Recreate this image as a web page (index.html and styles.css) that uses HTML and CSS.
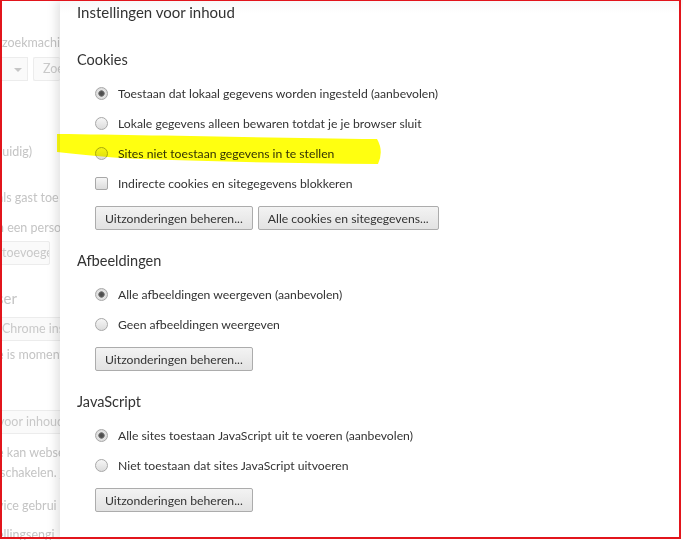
FILE: index.html
```html
<!DOCTYPE html>
<html lang="nl">
<head>
  <meta charset="UTF-8" />
  <title>Instellingen voor inhoud</title>
  <meta name="viewport" content="width=device-width, initial-scale=1.0" />
  <link rel="stylesheet" href="styles.css">
</head>

<body>
  <div class="screen">

    <!-- faded settings page behind the dialog -->
    <div class="settings-bg">
      <div class="bg-text row-search">zoekmachine</div>
      <div class="bg-controls">
        <div class="bg-select"><span class="bg-arrow"></span></div>
        <div class="bg-button short">Zoek</div>
      </div>
      <div class="bg-text row-current cut-lg">(huidig)</div>
      <div class="bg-text row-guest cut-sm">als gast toe</div>
      <div class="bg-text row-person cut-sm">n een perso</div>
      <div class="bg-button row-add cut-lg">toevoegen...</div>
      <div class="bg-heading row-browser cut-sm">ser</div>
      <div class="bg-button wide row-default cut-lg">Chrome instellen</div>
      <div class="bg-text row-moment cut-sm">e is moment</div>
      <div class="bg-button wide row-content cut-xl">voor inhoud...</div>
      <div class="bg-text row-web cut-sm">e kan webse</div>
      <div class="bg-text row-switch">schakelen. <span class="bg-link">M</span></div>
      <div class="bg-text row-service cut-sm">vice gebrui</div>
      <div class="bg-text row-engine cut-sm">ellingsengi</div>
    </div>

    <!-- content settings dialog -->
    <div class="overlay-dialog">
      <h1 class="dialog-title">Instellingen voor inhoud</h1>

      <section class="content-section first">
        <h2>Cookies</h2>
        <div class="option"><span class="radio checked"></span>Toestaan dat lokaal gegevens worden ingesteld (aanbevolen)</div>
        <div class="option"><span class="radio"></span>Lokale gegevens alleen bewaren totdat je je browser sluit</div>
        <div class="option"><span class="radio"></span>Sites niet toestaan gegevens in te stellen</div>
        <div class="option"><span class="checkbox"></span>Indirecte cookies en sitegegevens blokkeren</div>
        <div class="button-row">
          <button class="btn">Uitzonderingen beheren...</button>
          <button class="btn">Alle cookies en sitegegevens...</button>
        </div>
      </section>

      <section class="content-section">
        <h2>Afbeeldingen</h2>
        <div class="option"><span class="radio checked"></span>Alle afbeeldingen weergeven (aanbevolen)</div>
        <div class="option"><span class="radio"></span>Geen afbeeldingen weergeven</div>
        <div class="button-row">
          <button class="btn">Uitzonderingen beheren...</button>
        </div>
      </section>

      <section class="content-section">
        <h2>JavaScript</h2>
        <div class="option"><span class="radio checked"></span>Alle sites toestaan JavaScript uit te voeren (aanbevolen)</div>
        <div class="option"><span class="radio"></span>Niet toestaan dat sites JavaScript uitvoeren</div>
        <div class="button-row">
          <button class="btn">Uitzonderingen beheren...</button>
        </div>
      </section>
    </div>

    <!-- marker stroke and red frame drawn over the screenshot -->
    <svg class="marker" width="683" height="540" viewBox="0 0 683 540">
      <path d="M57,134 C150,135 280,138 377,139 Q384,151 378,164 C280,163 180,161 120,158 C95,156 75,154 57,152 Z" fill="#ffff10" />
    </svg>
    <div class="red-frame"></div>
  </div>
</body>
</html>
```

FILE: styles.css
```css
body {
  margin: 0;
  font-family: Lato, "Open Sans", "Noto Sans", sans-serif;
  color: #333;
  background: #fff;
}

.screen {
  position: relative;
  width: 683px;
  height: 540px;
  overflow: hidden;
  background: #fff;
}

/* ---- faded page behind ---- */

.settings-bg {
  width: 60px;
  height: 540px;
  overflow: hidden;
  white-space: nowrap;
  font-size: 12.5px;
  color: #c4c4c4;
}

.bg-text {
  line-height: 20px;
}

.bg-heading {
  font-size: 15px;
  line-height: 20px;
}

.bg-button {
  box-sizing: border-box;
  height: 24px;
  line-height: 22px;
  padding: 0 9px;
  border: 1px solid #ececec;
  border-radius: 2px;
  background: #fafafa;
  color: #c9c9c9;
  width: 58px;
  overflow: hidden;
}

.bg-button.short {
  width: 27px;
  border-right: none;
}

.bg-button.wide {
  width: 80px;
  border-right: none;
}

.bg-link {
  text-decoration: underline;
}

.cut-sm { margin-left: -3px; }
.cut-lg { margin-left: -8px; }
.cut-xl { margin-left: -12px; }

.row-search { margin-top: 33px; padding-left: 2px; }

.bg-controls {
  display: flex;
  gap: 5px;
  margin-top: 4px;
  height: 24px;
}

.bg-select {
  position: relative;
  flex: 0 0 auto;
  box-sizing: border-box;
  width: 28px;
  height: 24px;
  border: 1px solid #ececec;
  border-left: none;
  background: #fafafa;
}

.bg-arrow {
  position: absolute;
  right: 5px;
  top: 10px;
  border-left: 4px solid transparent;
  border-right: 4px solid transparent;
  border-top: 4px solid #c6c6c6;
}

.bg-controls .bg-button {
  flex: 0 0 auto;
}

.row-current { margin-top: 61px; }
.row-guest { margin-top: 26px; }
.row-person { margin-top: 10px; }
.row-add { margin-top: 3px; }
.row-browser { margin-top: 23px; }
.row-default { margin-top: 9px; }
.row-moment { margin-top: 4px; }
.row-content { margin-top: 45px; }
.row-web { margin-top: 9px; }
.row-switch { margin-top: 0; }
.row-service { margin-top: 13px; }
.row-engine { margin-top: 9px; }

/* ---- dialog ---- */

.overlay-dialog {
  position: absolute;
  left: 60px;
  top: 0;
  right: 0;
  bottom: 0;
  padding-left: 17px;
  background: linear-gradient(#f8f8f8, #fff 14px);
  box-shadow: -3px 0 10px rgba(0, 0, 0, 0.13);
}

.dialog-title {
  margin: 0;
  font-size: 15px;
  font-weight: normal;
  line-height: 24px;
  color: #333;
}

.content-section {
  margin-top: 21px;
}

.content-section.first {
  margin-top: 26px;
}

.content-section h2 {
  margin: 0 0 8px;
  font-size: 14.5px;
  font-weight: normal;
  line-height: 20px;
  color: #333;
}

.option {
  display: flex;
  align-items: center;
  height: 30px;
  padding-left: 18px;
  font-size: 12.2px;
  color: #333;
}

.radio,
.checkbox {
  flex: 0 0 auto;
  box-sizing: border-box;
  width: 13px;
  height: 13px;
  margin-right: 10px;
  border: 1px solid #a8a8a8;
  background: linear-gradient(#f6f6f6, #dcdcdc);
}

.radio {
  border-radius: 50%;
}

.radio.checked {
  background: radial-gradient(circle, #4a4a4a 0, #555 2px, #8a8a8a 3px, #e4e4e4 3.5px, #dadada 6px);
}

.checkbox {
  border-radius: 2px;
}

.button-row {
  display: flex;
  gap: 5px;
  margin-top: 8px;
  padding-left: 18px;
}

.btn {
  box-sizing: border-box;
  height: 24px;
  padding: 0 9px;
  border: 1px solid #acacac;
  border-radius: 2px;
  background: linear-gradient(#f3f3f3, #e2e2e2);
  font-family: inherit;
  font-size: 12.2px;
  color: #333;
}

/* ---- annotations ---- */

.marker {
  position: absolute;
  left: 0;
  top: 0;
  pointer-events: none;
  mix-blend-mode: multiply;
}

.red-frame {
  position: absolute;
  left: 0;
  top: 0;
  width: 681px;
  height: 539px;
  box-sizing: border-box;
  border: 2px solid #e2151c;
  border-top-width: 1px;
  pointer-events: none;
}
```
